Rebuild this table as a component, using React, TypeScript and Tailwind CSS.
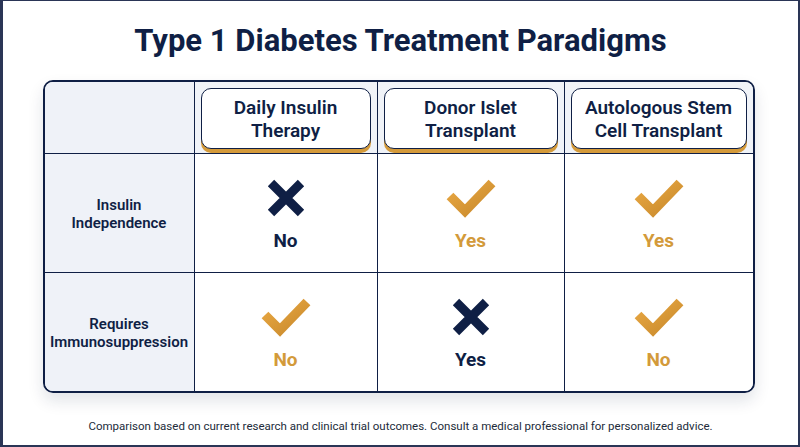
import React from "react";

const NAVY = "#0f1f45";

function XIcon() {
  return (
    <svg width="40" height="40" viewBox="0 0 40 40">
      <path d="M5 5 L35 35 M35 5 L5 35" stroke={NAVY} strokeWidth="9" strokeLinecap="butt" />
    </svg>
  );
}

function CheckIcon() {
  return (
    <svg width="52" height="42" viewBox="0 0 52 42">
      <defs>
        <linearGradient id="g" x1="0" y1="0" x2="1" y2="1">
          <stop offset="0" stopColor="#eaa944" />
          <stop offset="1" stopColor="#c98a2c" />
        </linearGradient>
      </defs>
      <path d="M5 19 L20 34 L47 6" stroke="url(#g)" strokeWidth="9.5" fill="none" strokeLinejoin="miter" strokeLinecap="butt" />
    </svg>
  );
}

function Cell({ ok, label, last, bottom }: { ok: boolean; label: string; last?: boolean; bottom?: boolean }) {
  return (
    <div
      className={`flex flex-col items-center justify-center pt-[4px] bg-white ${last ? "" : "border-r-[1.5px]"} ${bottom ? "" : "border-b-[1.5px]"} border-[#0f1f45]`}
    >
      <div className="h-[42px] flex items-center justify-center">{ok ? <CheckIcon /> : <XIcon />}</div>
      <div className={`mt-[11px] text-[19px] leading-[22px] font-bold ${ok ? "text-[#d39a3a]" : "text-[#0f1f45]"}`}>{label}</div>
    </div>
  );
}

function Head({ a, b, last }: { a: string; b: string; last?: boolean }) {
  return (
    <div className={`bg-[#f0f3f8] px-[6px] pt-[6px] pb-[5px] ${last ? "" : "border-r-[1.5px]"} border-b-[1.5px] border-[#0f1f45]`}>
      <div className="h-[61px] rounded-[10px] border-[1.5px] border-[#0f1f45] bg-white shadow-[0_4px_0_#d49a3a] flex flex-col items-center justify-center text-[19px] leading-[23px] font-semibold text-[#0f1f45]">
        <span>{a}</span>
        <span>{b}</span>
      </div>
    </div>
  );
}

function Label({ a, b, bottom }: { a: string; b: string; bottom?: boolean }) {
  return (
    <div className={`bg-[#eff2f8] flex flex-col items-center justify-center pt-[3px] border-r-[1.5px] ${bottom ? "" : "border-b-[1.5px]"} border-[#0f1f45] text-[15px] leading-[18px] font-semibold text-[#0f1f45]`}>
      <span>{a}</span>
      <span>{b}</span>
    </div>
  );
}

export default function App() {
  return (
    <div
      className="w-[800px] h-[447px] bg-white border-l-[3px] border-t border-r-2 border-b-2 border-[#2a3556] flex flex-col items-center"
      style={{ fontFamily: "Roboto, 'Liberation Sans', sans-serif" }}
    >
      <h1 className="mt-[22px] text-[31px] leading-[36px] font-bold text-[#0f1f45]">Type 1 Diabetes Treatment Paradigms</h1>
      <div className="mt-[21px] ml-[-4px] w-[712px] h-[313px] grid grid-cols-[150px_183px_187px_1fr] grid-rows-[72px_1fr_1fr] rounded-[10px] border-2 border-[#0f1f45] overflow-hidden shadow-[0_8px_16px_rgba(15,31,69,0.12)]">
        <div className="bg-[#eff2f8] border-r-[1.5px] border-b-[1.5px] border-[#0f1f45]" />
        <Head a="Daily Insulin" b="Therapy" />
        <Head a="Donor Islet" b="Transplant" />
        <Head a="Autologous Stem" b="Cell Transplant" last />
        <Label a="Insulin" b="Independence" />
        <Cell ok={false} label="No" />
        <Cell ok label="Yes" />
        <Cell ok label="Yes" last />
        <Label a="Requires" b="Immunosuppression" bottom />
        <Cell ok label="No" bottom />
        <Cell ok={false} label="Yes" bottom />
        <Cell ok label="No" last bottom />
      </div>
      <p className="mt-[25px] text-[11.5px] leading-[16px] text-[#222b3a]">
        Comparison based on current research and clinical trial outcomes. Consult a medical professional for personalized advice.
      </p>
    </div>
  );
}
